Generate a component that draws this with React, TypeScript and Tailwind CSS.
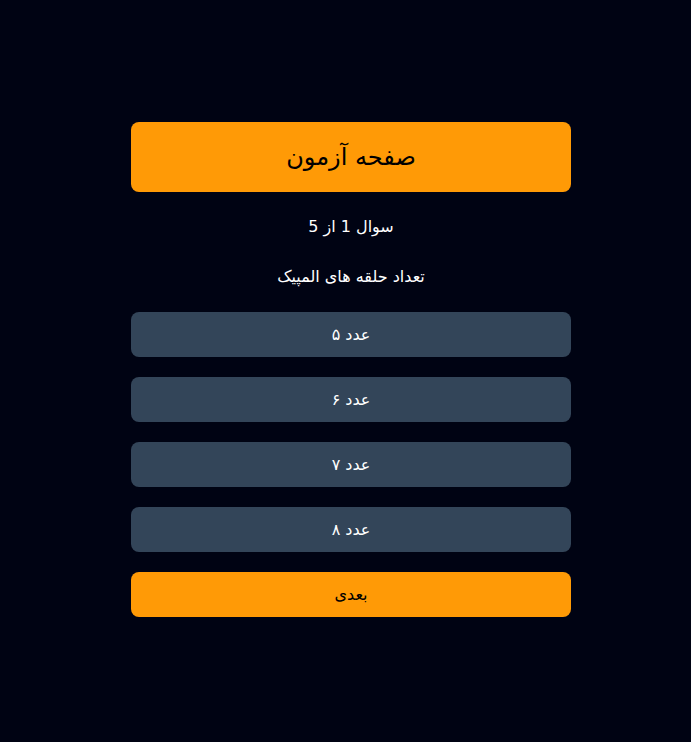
import { useState } from 'react';

const options = ['عدد ۵', 'عدد ۶', 'عدد ۷', 'عدد ۸'];

export default function App() {
  const [selected, setSelected] = useState<number | null>(null);

  return (
    <div
      dir="rtl"
      className="min-h-screen bg-[#000313] flex justify-center pl-[11px]"
      style={{ fontFamily: '"DejaVu Sans", "Noto Sans", sans-serif' }}
    >
      <div className="w-[440px] pt-[122px] flex flex-col">
        <div className="h-[70px] rounded-lg bg-[#ff9a06] flex items-center justify-center">
          <h1 className="text-2xl text-black">صفحه آزمون</h1>
        </div>
        <p className="mt-[23px] text-center text-base leading-6 text-white">سوال 1 از 5</p>
        <p className="mt-[26px] text-center text-base leading-6 text-white">تعداد حلقه های المپیک</p>
        <div className="mt-[23px] flex flex-col gap-5">
          {options.map((opt, i) => (
            <button
              key={opt}
              onClick={() => setSelected(i)}
              className={
                'h-[45px] rounded-lg text-white text-base font-medium ' +
                (selected === i ? 'bg-[#475569]' : 'bg-[#334559]')
              }
            >
              {opt}
            </button>
          ))}
          <button className="h-[45px] rounded-lg bg-[#ff9a06] text-black text-base">بعدی</button>
        </div>
      </div>
    </div>
  );
}
